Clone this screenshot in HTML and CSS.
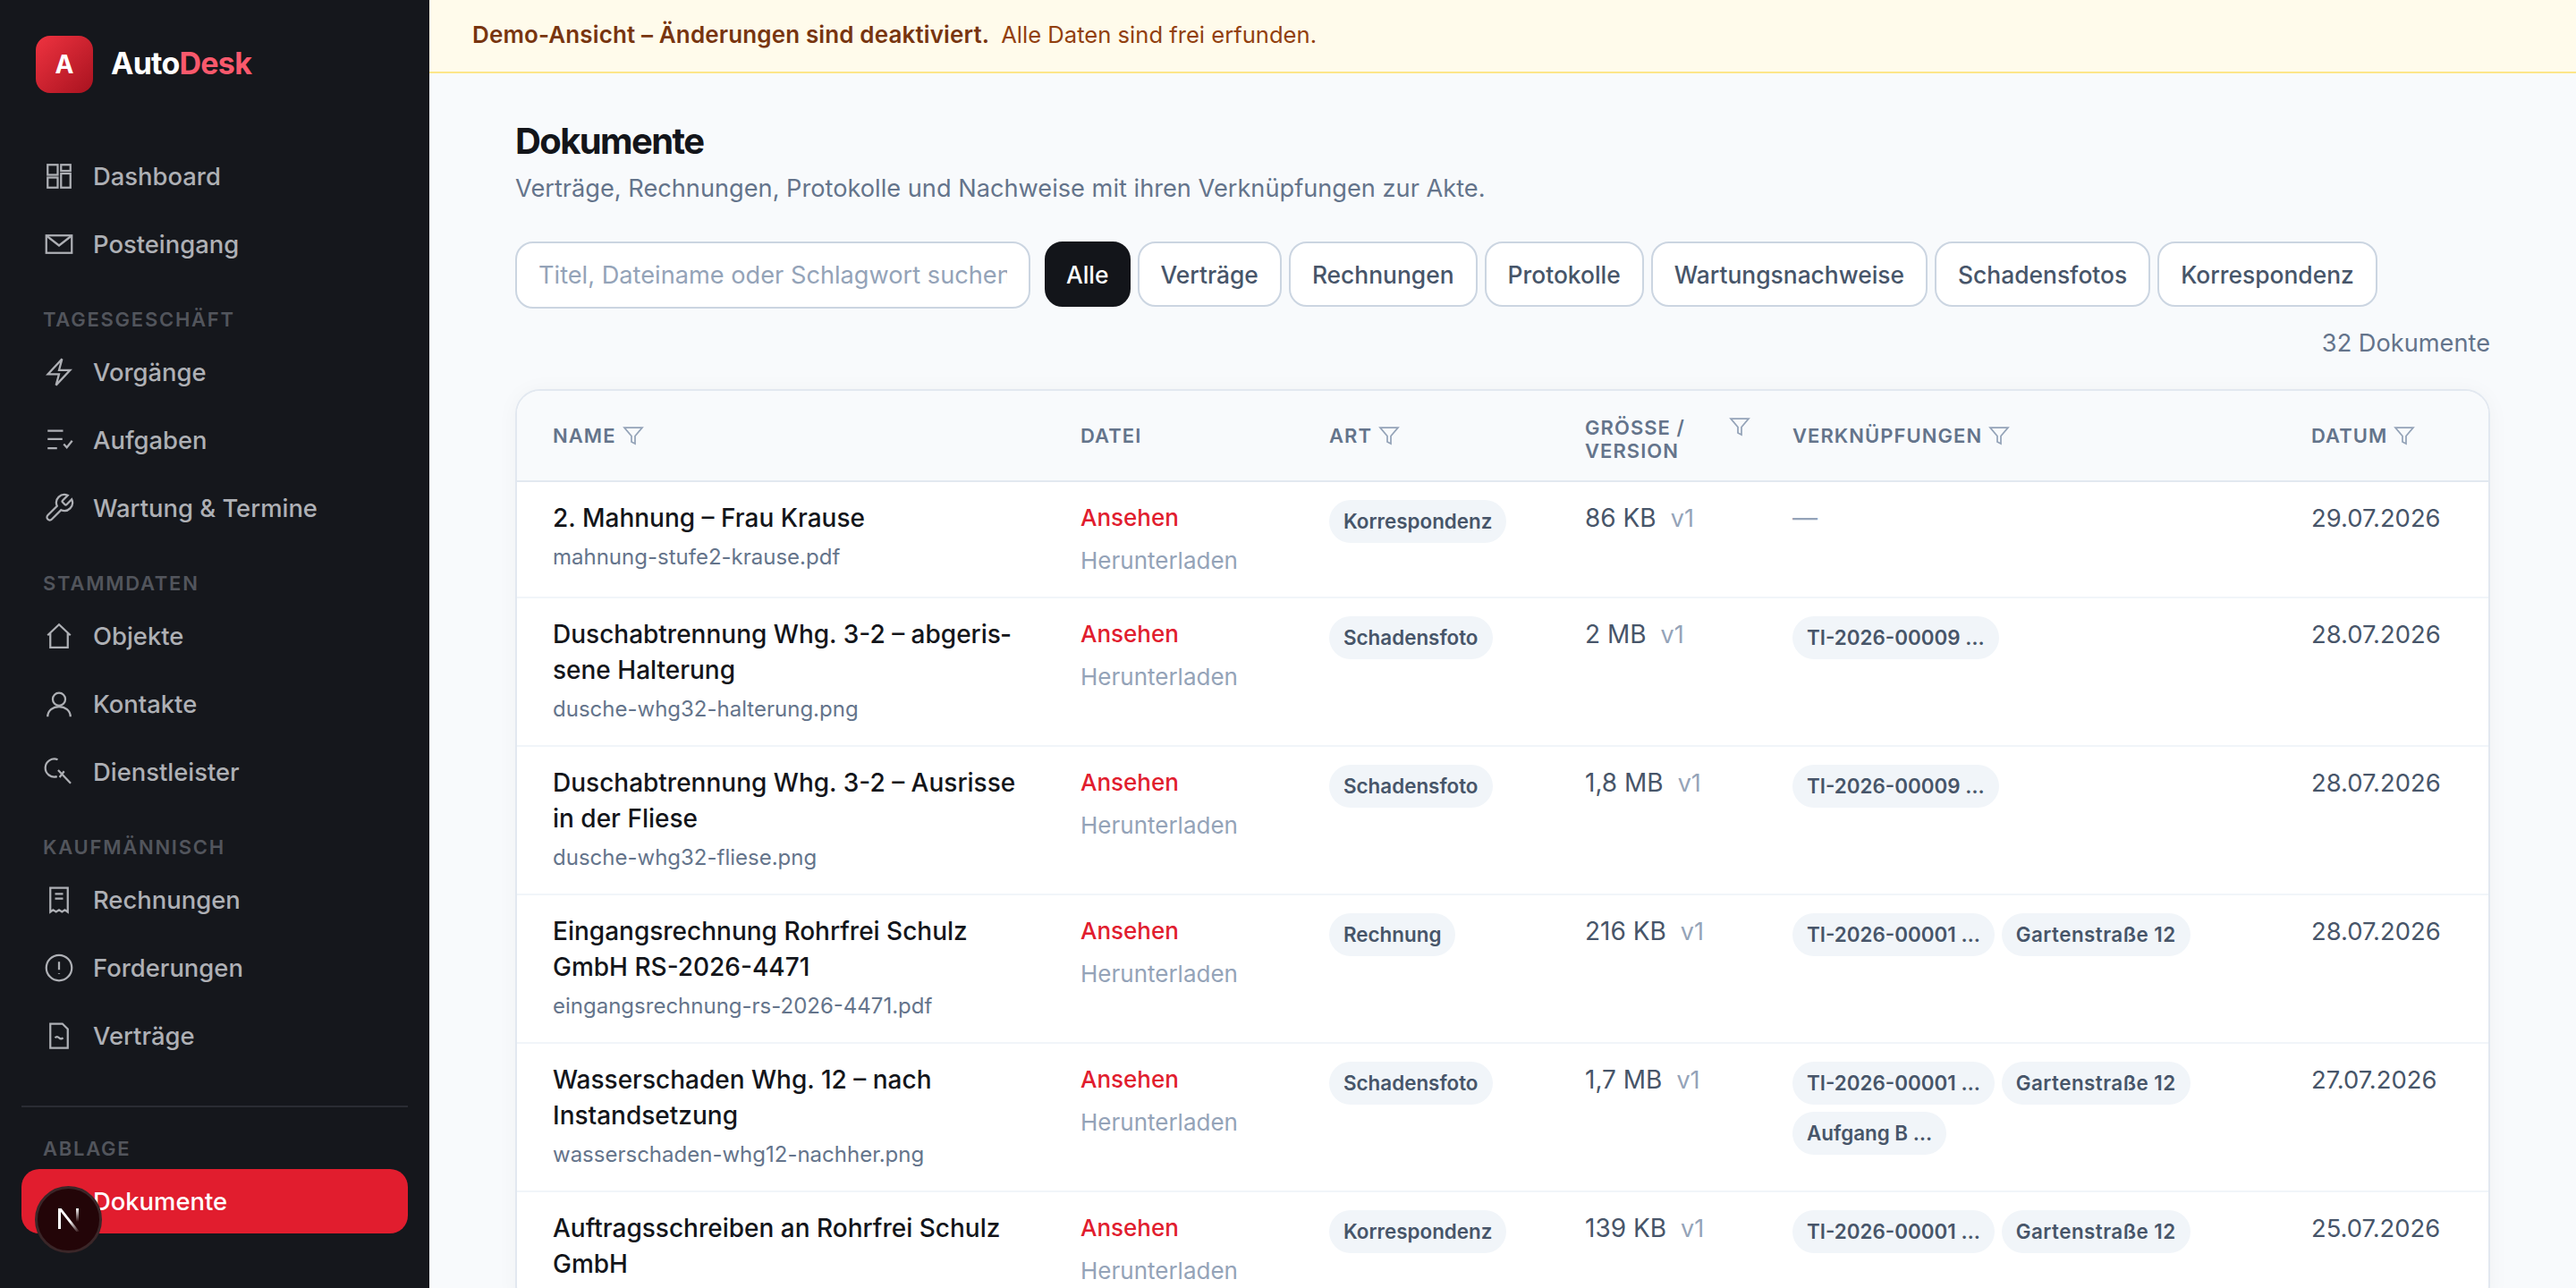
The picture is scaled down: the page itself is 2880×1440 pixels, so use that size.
FILE: index.html
```html
<!DOCTYPE html>
<html lang="de">
<head>
    <meta charset="UTF-8">
    <meta name="viewport" content="width=device-width, initial-scale=1.0">
    <title>Dokumente - AutoDesk</title>
    <link rel="stylesheet" href="styles.css">
</head>
<body>
    <aside class="sidebar">
        <div class="brand">
            <div class="brand-logo">A</div>
            <div class="brand-name">Auto<span>Desk</span></div>
        </div>

        <nav class="nav">
            <div class="nav-group nav-group-first">
                <a href="#" class="nav-item">
                    <svg class="nav-icon" viewBox="0 0 24 24"><rect x="3.5" y="3.5" width="7.5" height="7.5"/><rect x="3.5" y="13" width="7.5" height="7.5"/><rect x="13.5" y="3.5" width="7" height="4.5"/><rect x="13.5" y="10" width="7" height="10.5"/></svg>
                    Dashboard
                </a>
                <a href="#" class="nav-item">
                    <svg class="nav-icon" viewBox="0 0 24 24"><rect x="2.5" y="5.5" width="19" height="13"/><path d="M3 6l9 7 9-7"/></svg>
                    Posteingang
                </a>
            </div>

            <div class="nav-group">
                <div class="nav-label">Tagesgeschäft</div>
                <a href="#" class="nav-item">
                    <svg class="nav-icon" viewBox="0 0 24 24"><path d="M3.75 13.5l10.5-11.25L12 10.5h8.25L9.75 21.75 12 13.5H3.75z"/></svg>
                    Vorgänge
                </a>
                <a href="#" class="nav-item">
                    <svg class="nav-icon" viewBox="0 0 24 24"><path d="M3.5 5H15M3.5 11.3H14.5M3.5 18H10.5M15.5 15l2.3 2.5 4-5"/></svg>
                    Aufgaben
                </a>
                <a href="#" class="nav-item">
                    <svg class="nav-icon" viewBox="0 0 24 24"><path d="M14.7 6.3a1 1 0 0 0 0 1.4l1.6 1.6a1 1 0 0 0 1.4 0l3.77-3.77a6 6 0 0 1-7.94 7.94l-6.91 6.91a2.12 2.12 0 0 1-3-3l6.91-6.91a6 6 0 0 1 7.94-7.94l-3.76 3.76z"/></svg>
                    Wartung &amp; Termine
                </a>
            </div>

            <div class="nav-group">
                <div class="nav-label">Stammdaten</div>
                <a href="#" class="nav-item">
                    <svg class="nav-icon" viewBox="0 0 24 24"><path d="M3.5 11.5L12 3.5l8.5 8M5.5 10v10.5h13V10"/></svg>
                    Objekte
                </a>
                <a href="#" class="nav-item">
                    <svg class="nav-icon" viewBox="0 0 24 24"><circle cx="12" cy="8.5" r="4.7"/><path d="M3.5 21.5c0-4.5 3.8-7.5 8.5-7.5s8.5 3 8.5 7.5"/></svg>
                    Kontakte
                </a>
                <a href="#" class="nav-item">
                    <svg class="nav-icon" viewBox="0 0 24 24"><path d="M11 2.8A6.7 6.7 0 1 0 10.5 15.4M11.3 10.7l9.4 9.8M12.4 16l3.4-4.5"/></svg>
                    Dienstleister
                </a>
            </div>

            <div class="nav-group">
                <div class="nav-label">Kaufmännisch</div>
                <a href="#" class="nav-item">
                    <svg class="nav-icon" viewBox="0 0 24 24"><path d="M5.5 3h13v18l-2.2-1.5-2.1 1.5-2.2-1.5-2.2 1.5-2.2-1.5L5.5 21zM9 7.5h6M9 11h6"/></svg>
                    Rechnungen
                </a>
                <a href="#" class="nav-item">
                    <svg class="nav-icon" viewBox="0 0 24 24"><circle cx="12" cy="12" r="9.5"/><path d="M12 7.5v6M12 16v.5"/></svg>
                    Forderungen
                </a>
                <a href="#" class="nav-item">
                    <svg class="nav-icon" viewBox="0 0 24 24"><path d="M5.5 3h9l4 4v14h-13zM9 13.5c1-1 2-1 3 0s2 1 3 0"/></svg>
                    Verträge
                </a>
            </div>

            <div class="nav-divider"></div>

            <div class="nav-group nav-group-last">
                <div class="nav-label">Ablage</div>
                <a href="#" class="nav-item active">
                    <svg class="nav-icon" viewBox="0 0 24 24"><path d="M7 8h8l2 2v9H7z"/></svg>
                    Dokumente
                </a>
            </div>
        </nav>
    </aside>

    <div class="dev-badge">
        <svg viewBox="0 0 26 28" width="26" height="28">
            <defs>
                <linearGradient id="n-diag" x1="0" y1="0" x2="1" y2="1">
                    <stop offset="0.55" stop-color="#fff"/>
                    <stop offset="1" stop-color="#fff" stop-opacity="0"/>
                </linearGradient>
                <linearGradient id="n-right" x1="0" y1="0" x2="0" y2="1">
                    <stop offset="0" stop-color="#fff"/>
                    <stop offset="1" stop-color="#fff" stop-opacity="0"/>
                </linearGradient>
            </defs>
            <rect x="1" y="1" width="3" height="23" fill="#fff"/>
            <polygon points="1,1 4.6,1 25,27 21.4,27" fill="url(#n-diag)"/>
            <rect x="21" y="1" width="3" height="15" fill="url(#n-right)"/>
        </svg>
    </div>

    <div class="main">
        <div class="demo-banner">
            <strong>Demo-Ansicht – Änderungen sind deaktiviert.</strong>
            <span>Alle Daten sind frei erfunden.</span>
        </div>

        <div class="content">
            <h1>Dokumente</h1>
            <p class="subtitle">Verträge, Rechnungen, Protokolle und Nachweise mit ihren Verknüpfungen zur Akte.</p>

            <div class="filters">
                <input class="search" type="text" placeholder="Titel, Dateiname oder Schlagwort suchen…">
                <button class="chip active">Alle</button>
                <button class="chip">Verträge</button>
                <button class="chip">Rechnungen</button>
                <button class="chip">Protokolle</button>
                <button class="chip">Wartungsnachweise</button>
                <button class="chip">Schadensfotos</button>
                <button class="chip">Korrespondenz</button>
            </div>

            <div class="count">32 Dokumente</div>

            <div class="table-card">
                <table>
                    <thead>
                        <tr>
                            <th class="col-name"><div class="th-inner">Name <svg class="funnel" viewBox="0 0 24 24"><polygon points="22 3 2 3 10 12.46 10 19 14 21 14 12.46 22 3"/></svg></div></th>
                            <th class="col-file"><div class="th-inner">Datei</div></th>
                            <th class="col-type"><div class="th-inner">Art <svg class="funnel" viewBox="0 0 24 24"><polygon points="22 3 2 3 10 12.46 10 19 14 21 14 12.46 22 3"/></svg></div></th>
                            <th class="col-size"><div class="th-inner th-wrap"><span>Größe / Version</span> <svg class="funnel" viewBox="0 0 24 24"><polygon points="22 3 2 3 10 12.46 10 19 14 21 14 12.46 22 3"/></svg></div></th>
                            <th class="col-links"><div class="th-inner">Verknüpfungen <svg class="funnel" viewBox="0 0 24 24"><polygon points="22 3 2 3 10 12.46 10 19 14 21 14 12.46 22 3"/></svg></div></th>
                            <th class="col-date"><div class="th-inner">Datum <svg class="funnel" viewBox="0 0 24 24"><polygon points="22 3 2 3 10 12.46 10 19 14 21 14 12.46 22 3"/></svg></div></th>
                        </tr>
                    </thead>
                    <tbody>
                        <tr>
                            <td class="cell-doc"><div class="doc-title">2. Mahnung – Frau Krause</div><div class="doc-file">mahnung-stufe2-krause.pdf</div></td>
                            <td><a href="#" class="link-view">Ansehen</a><a href="#" class="link-get">Herunterladen</a></td>
                            <td><span class="badge">Korrespondenz</span></td>
                            <td class="size">86 KB<span class="version">v1</span></td>
                            <td class="empty">—</td>
                            <td class="date">29.07.2026</td>
                        </tr>
                        <tr>
                            <td class="cell-doc"><div class="doc-title">Duschabtrennung Whg. 3-2 – abgeris&shy;sene Halterung</div><div class="doc-file">dusche-whg32-halterung.png</div></td>
                            <td><a href="#" class="link-view">Ansehen</a><a href="#" class="link-get">Herunterladen</a></td>
                            <td><span class="badge">Schadensfoto</span></td>
                            <td class="size">2 MB<span class="version">v1</span></td>
                            <td><div class="badges"><span class="badge">TI-2026-00009 …</span></div></td>
                            <td class="date">28.07.2026</td>
                        </tr>
                        <tr>
                            <td class="cell-doc"><div class="doc-title">Duschabtrennung Whg. 3-2 – Ausrisse in der Fliese</div><div class="doc-file">dusche-whg32-fliese.png</div></td>
                            <td><a href="#" class="link-view">Ansehen</a><a href="#" class="link-get">Herunterladen</a></td>
                            <td><span class="badge">Schadensfoto</span></td>
                            <td class="size">1,8 MB<span class="version">v1</span></td>
                            <td><div class="badges"><span class="badge">TI-2026-00009 …</span></div></td>
                            <td class="date">28.07.2026</td>
                        </tr>
                        <tr>
                            <td class="cell-doc"><div class="doc-title">Eingangsrechnung Rohrfrei Schulz GmbH RS-2026-4471</div><div class="doc-file">eingangsrechnung-rs-2026-4471.pdf</div></td>
                            <td><a href="#" class="link-view">Ansehen</a><a href="#" class="link-get">Herunterladen</a></td>
                            <td><span class="badge">Rechnung</span></td>
                            <td class="size">216 KB<span class="version">v1</span></td>
                            <td><div class="badges"><span class="badge">TI-2026-00001 …</span><span class="badge badge-place">Gartenstraße 12</span></div></td>
                            <td class="date">28.07.2026</td>
                        </tr>
                        <tr>
                            <td class="cell-doc"><div class="doc-title">Wasserschaden Whg. 12 – nach Instandsetzung</div><div class="doc-file">wasserschaden-whg12-nachher.png</div></td>
                            <td><a href="#" class="link-view">Ansehen</a><a href="#" class="link-get">Herunterladen</a></td>
                            <td><span class="badge">Schadensfoto</span></td>
                            <td class="size">1,7 MB<span class="version">v1</span></td>
                            <td><div class="badges badges-narrow"><span class="badge">TI-2026-00001 …</span><span class="badge badge-place">Gartenstraße 12</span><span class="badge">Aufgang B …</span></div></td>
                            <td class="date">27.07.2026</td>
                        </tr>
                        <tr>
                            <td class="cell-doc"><div class="doc-title">Auftragsschreiben an Rohrfrei Schulz GmbH</div></td>
                            <td><a href="#" class="link-view">Ansehen</a><a href="#" class="link-get">Herunterladen</a></td>
                            <td><span class="badge">Korrespondenz</span></td>
                            <td class="size">139 KB<span class="version">v1</span></td>
                            <td><div class="badges"><span class="badge">TI-2026-00001 …</span><span class="badge badge-place">Gartenstraße 12</span></div></td>
                            <td class="date">25.07.2026</td>
                        </tr>
                    </tbody>
                </table>
            </div>
        </div>
    </div>
</body>
</html>
```

FILE: styles.css
```css
* {
    box-sizing: border-box;
}
html, body {
    height: 100%;
}
body {
    margin: 0;
    display: flex;
    overflow: hidden;
    font-family: Inter, "Noto Sans", sans-serif;
    background-color: #f8fafc;
    color: #0f172a;
}
a {
    text-decoration: none;
}

/* Sidebar */
.sidebar {
    flex: 0 0 480px;
    height: 100%;
    padding: 40px 24px 0;
    background: #15171c;
    overflow: hidden;
}
.brand {
    display: flex;
    align-items: center;
    gap: 20px;
    padding-left: 16px;
    margin-bottom: 57px;
}
.brand-logo {
    width: 64px;
    height: 64px;
    display: flex;
    align-items: center;
    justify-content: center;
    border-radius: 16px;
    background: linear-gradient(135deg, #ef3340, #a8121f);
    color: #fff;
    font-size: 28px;
    font-weight: 700;
}
.brand-name {
    padding-bottom: 3px;
    font-size: 34px;
    font-weight: 700;
    letter-spacing: -0.75px;
    color: #fff;
}
.brand-name span {
    color: #f9596c;
}
.nav-group {
    display: flex;
    flex-direction: column;
    gap: 4px;
    margin-top: 32px;
}
.nav-group-first {
    margin-top: 0;
}
.nav-group-last {
    margin-top: 30px;
}
.nav-label {
    height: 32px;
    margin-bottom: 3px;
    padding-left: 24px;
    font-size: 22px;
    font-weight: 600;
    line-height: 32px;
    letter-spacing: 1.75px;
    text-transform: uppercase;
    color: #52555c;
}
.nav-item {
    display: flex;
    align-items: center;
    gap: 20px;
    height: 72px;
    padding: 0 24px;
    border-radius: 20px;
    font-size: 27.4px;
    font-weight: 500;
    color: #aeb0b5;
}
.nav-item.active {
    background: #e11d2e;
    color: #fff;
}
.nav-icon {
    flex: 0 0 36px;
    width: 36px;
    height: 36px;
    fill: none;
    stroke: currentColor;
    stroke-width: 1.5;
}
.nav-divider {
    height: 2px;
    margin-top: 42px;
    background: #2a2c33;
}

/* Dev badge bottom left */
.dev-badge {
    position: fixed;
    left: 39px;
    top: 1326px;
    width: 75px;
    height: 75px;
    display: flex;
    align-items: center;
    justify-content: center;
    border-radius: 50%;
    border: 3px solid #3a2628;
    background: #230508;
}

/* Main */
.main {
    flex: 1;
    min-width: 0;
    height: 100%;
    overflow: hidden;
}
.demo-banner {
    height: 82px;
    display: flex;
    align-items: center;
    gap: 13px;
    padding: 0 48px 3px;
    background: #fffbeb;
    border-bottom: 2px solid #fde68a;
    font-size: 25.6px;
    color: #92400e;
}
.demo-banner strong {
    font-size: 26px;
    font-weight: 600;
    letter-spacing: 0.13px;
    color: #78350f;
}
.content {
    padding: 50px 96px 0;
}
h1 {
    margin: 0;
    font-size: 40px;
    font-weight: 700;
    line-height: 52px;
    letter-spacing: -1.6px;
    color: #13151a;
}
.subtitle {
    margin: 5px 0 0;
    font-size: 27.2px;
    line-height: 44px;
    color: #64748b;
}
.filters {
    display: flex;
    align-items: flex-start;
    gap: 8px;
    margin-top: 37px;
}
.search {
    flex: 0 0 576px;
    width: 576px;
    height: 75px;
    margin-right: 8px;
    padding: 0 24px;
    border: 2px solid #cbd5e1;
    border-radius: 20px;
    background: #fff;
    font-family: inherit;
    font-size: 27.2px;
    color: #334155;
}
.search::placeholder {
    color: #94a3b8;
}
.chip {
    height: 73px;
    padding: 0 24px;
    border: 2px solid #cbd5e1;
    border-radius: 20px;
    background: #fff;
    font-family: inherit;
    font-size: 26.4px;
    font-weight: 500;
    color: #475569;
}
.chip.active {
    padding: 0 22px;
    background: #13151a;
    border-color: #13151a;
    color: #fff;
}
.count {
    margin-top: 19px;
    text-align: right;
    font-size: 27.2px;
    line-height: 40px;
    color: #64748b;
}

/* Table */
.table-card {
    margin-top: 31px;
    border: 2px solid #e2e8f0;
    border-radius: 28px;
    background: #fff;
    overflow: hidden;
    box-shadow: 0 2px 24px rgba(15, 23, 42, 0.04);
}
table {
    width: 100%;
    table-layout: fixed;
    border-collapse: separate;
    border-spacing: 0;
}
.col-name { width: 590px; }
.col-file { width: 278px; }
.col-type { width: 286px; }
.col-size { width: 232px; }
.col-links { width: 580px; }
.col-date { width: 238px; }
th {
    height: 102px;
    padding: 0 47px 0 40px;
    background: #f8fafc;
    border-bottom: 2px solid #e2e8f0;
    text-align: left;
    vertical-align: middle;
    font-size: 22px;
    font-weight: 600;
    line-height: 26px;
    letter-spacing: 1.05px;
    text-transform: uppercase;
    color: #64748b;
}
th.col-size {
    padding-right: 7px;
}
th:last-child, td:last-child {
    padding-right: 0;
}
.th-inner {
    display: flex;
    align-items: center;
    gap: 7px;
}
.th-wrap {
    align-items: flex-start;
    justify-content: space-between;
    padding-top: 8px;
}
.funnel {
    flex: 0 0 24px;
    width: 24px;
    height: 24px;
    fill: none;
    stroke: #94a3b8;
    stroke-width: 1.75;
}
td {
    padding: 20px 47px 20px 40px;
    border-bottom: 2px solid #f1f5f9;
    vertical-align: top;
    font-size: 28px;
    line-height: 40px;
    color: #475569;
}
td.cell-doc {
    padding-right: 8px;
}
.doc-title {
    font-weight: 500;
    color: #13151a;
}
.doc-file {
    margin-top: 4px;
    font-size: 24px;
    color: #64748b;
}
.link-view, .link-get {
    display: block;
    font-size: 26px;
}
.link-view {
    font-weight: 500;
    color: #e11d2e;
}
.link-get {
    margin-top: 8px;
    color: #94a3b8;
}
.date {
    font-size: 27.4px;
}
.version {
    margin-left: 16px;
    font-size: 27px;
    color: #94a3b8;
}
.empty {
    color: #94a3b8;
}
.badges {
    display: flex;
    flex-wrap: wrap;
    gap: 8px;
}
.badges-narrow {
    max-width: 460px;
}
.badge {
    display: inline-block;
    height: 48px;
    padding: 0 16px;
    border-radius: 24px;
    background: #f1f5f9;
    font-size: 22.4px;
    font-weight: 600;
    line-height: 48px;
    color: #475569;
    white-space: nowrap;
}
.badge-place {
    letter-spacing: 0.45px;
}
```
